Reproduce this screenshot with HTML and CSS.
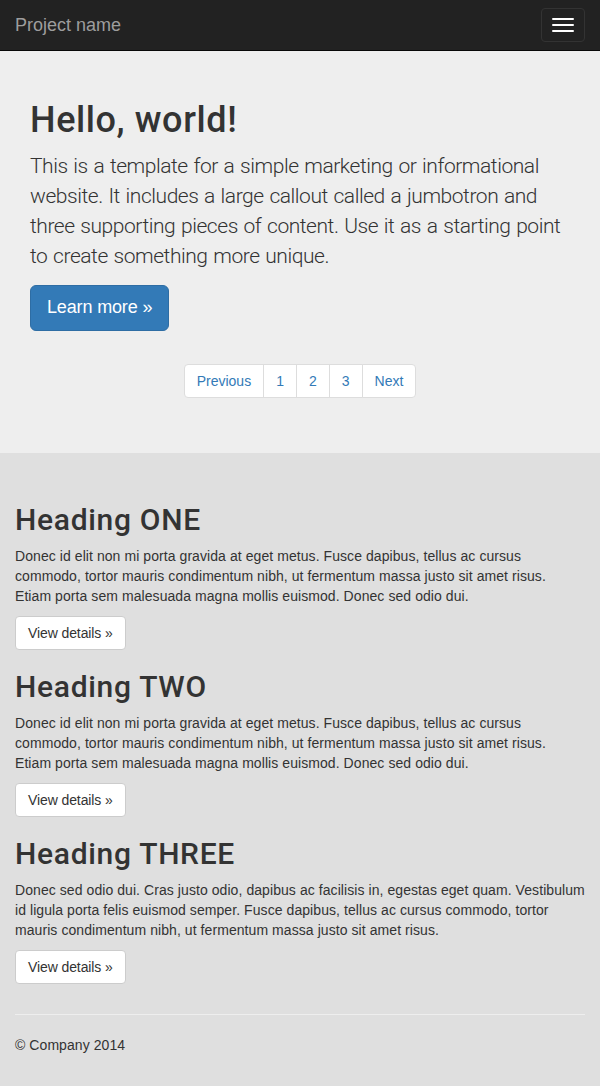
FILE: index.html
```html
<!DOCTYPE html>
<html lang="en">
<head>
<meta charset="utf-8">
<title>Jumbotron Template</title>
<link rel="stylesheet" href="styles.css">
</head>
<body>
<nav class="navbar">
  <a class="brand" href="#">Project name</a>
  <button class="toggle" type="button" aria-label="Toggle navigation">
    <span class="bar"></span><span class="bar"></span><span class="bar"></span>
  </button>
</nav>
<div class="jumbotron">
  <h1>Hello, world!</h1>
  <p class="lead">This is a template for a simple marketing or informational website. It includes a large callout called a jumbotron and three supporting pieces of content. Use it as a starting point to create something more unique.</p>
  <p class="cta"><a class="btn btn-primary btn-lg" href="#">Learn more &raquo;</a></p>
  <nav class="pager-wrap">
    <ul class="pagination">
      <li><a href="#">Previous</a></li>
      <li><a href="#">1</a></li>
      <li><a href="#">2</a></li>
      <li><a href="#">3</a></li>
      <li><a href="#">Next</a></li>
    </ul>
  </nav>
</div>
<div class="content">
  <div class="row">
    <div class="col">
      <h2>Heading ONE</h2>
      <p>Donec id elit non mi porta gravida at eget metus. Fusce dapibus, tellus ac cursus commodo, tortor mauris condimentum nibh, ut fermentum massa justo sit amet risus. Etiam porta sem malesuada magna mollis euismod. Donec sed odio dui.</p>
      <p><a class="btn btn-default" href="#">View details &raquo;</a></p>
    </div>
    <div class="col">
      <h2>Heading TWO</h2>
      <p>Donec id elit non mi porta gravida at eget metus. Fusce dapibus, tellus ac cursus commodo, tortor mauris condimentum nibh, ut fermentum massa justo sit amet risus. Etiam porta sem malesuada magna mollis euismod. Donec sed odio dui.</p>
      <p><a class="btn btn-default" href="#">View details &raquo;</a></p>
    </div>
    <div class="col">
      <h2>Heading THREE</h2>
      <p>Donec sed odio dui. Cras justo odio, dapibus ac facilisis in, egestas eget quam. Vestibulum id ligula porta felis euismod semper. Fusce dapibus, tellus ac cursus commodo, tortor mauris condimentum nibh, ut fermentum massa justo sit amet risus.</p>
      <p><a class="btn btn-default" href="#">View details &raquo;</a></p>
    </div>
  </div>
  <hr class="rule">
  <footer class="footer">
    <p>&copy; Company 2014</p>
  </footer>
</div>
</body>
</html>
```
FILE: styles.css
```css
* { box-sizing: border-box; }
html, body { margin: 0; padding: 0; }
body {
  font-family: "Liberation Sans", Arial, sans-serif;
  font-size: 14px;
  line-height: 20px;
  color: #333;
  background: #dfdfdf;
}
a { text-decoration: none; }

.navbar {
  height: 51px;
  background: #222;
  border-bottom: 1px solid #080808;
  display: flex;
  align-items: center;
  justify-content: space-between;
  padding: 0 15px;
}
.brand {
  color: #9d9d9d;
  font-size: 18px;
  line-height: 20px;
}
.toggle {
  width: 44px;
  height: 34px;
  border: 1px solid #333;
  border-radius: 4px;
  background: transparent;
  padding: 0;
  display: flex;
  flex-direction: column;
  align-items: center;
  justify-content: center;
  gap: 4px;
  margin-top: -1px;
}
.bar {
  display: block;
  width: 22px;
  height: 2px;
  border-radius: 1px;
  background: #fff;
}

.jumbotron {
  background: #eee;
  padding: 30px 30px 55px;
}
.jumbotron h1 {
  margin: 20px 0 10px;
  font-family: Roboto, "Liberation Sans", sans-serif;
  font-size: 36px;
  line-height: 1.1;
  font-weight: 500;
  letter-spacing: 0.6px;
}
.lead {
  margin: 0 0 14px;
  font-family: Roboto, "Liberation Sans", sans-serif;
  font-size: 21px;
  line-height: 30px;
  font-weight: 300;
  letter-spacing: -0.45px;
  word-spacing: 1px;
  color: #333;
}
.cta { margin: 0; }

.btn {
  display: inline-block;
  border: 1px solid transparent;
  text-align: center;
  white-space: nowrap;
  letter-spacing: 0;
}
.btn-lg {
  padding: 10px 16px;
  font-size: 18px;
  line-height: 1.3333;
  border-radius: 6px;
  letter-spacing: -0.15px;
}
.btn-primary {
  color: #fff;
  background: #337ab7;
  border-color: #2e6da4;
}
.btn-default {
  color: #333;
  background: #fff;
  border-color: #ccc;
  padding: 6px 12px;
  font-size: 14px;
  line-height: 20px;
  border-radius: 4px;
  letter-spacing: -0.1px;
}

.pager-wrap {
  display: flex;
  justify-content: center;
  margin-top: 33px;
}
.pagination {
  display: flex;
  list-style: none;
  margin: 0;
  padding: 0;
}
.pagination li a {
  display: block;
  padding: 6px 12px;
  line-height: 20px;
  color: #337ab7;
  background: #fff;
  border: 1px solid #ddd;
  margin-left: -1px;
}
.pagination li:first-child a {
  margin-left: 0;
  border-radius: 4px 0 0 4px;
}
.pagination li:last-child a {
  border-radius: 0 4px 4px 0;
}

.content {
  padding: 30px 15px 20px;
}
.row { display: flow-root; }
.content h2 {
  margin: 20px 0 10px;
  font-family: Roboto, "Liberation Sans", sans-serif;
  font-size: 30px;
  line-height: 1.1;
  font-weight: 500;
  letter-spacing: 0.7px;
}
.content p {
  margin: 0 0 10px;
  letter-spacing: 0.07px;
}
.rule {
  margin: 20px 0;
  border: 0;
  border-top: 1px solid #eee;
}
.footer p { margin: 0 0 10px; }
```
